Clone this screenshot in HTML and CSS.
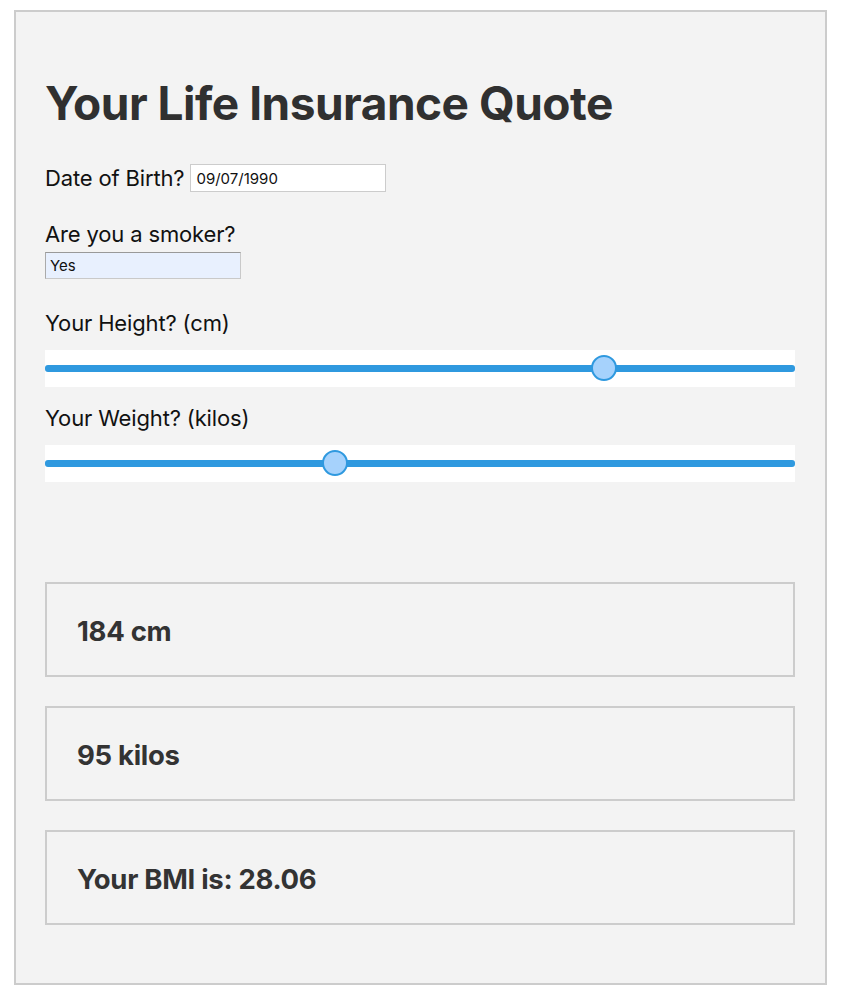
FILE: index.html
```html
<!DOCTYPE html>
<html lang="en">
<head>
<meta charset="utf-8">
<title>Your Life Insurance Quote</title>
<link rel="stylesheet" href="styles.css">
</head>
<body>
<main class="quote">
  <h1 class="title">Your Life Insurance Quote</h1>

  <div class="row">
    <label class="label" for="dob">Date of Birth?</label>
    <input class="text-input" id="dob" type="text" value="09/07/1990">
  </div>

  <label class="label label-block" for="smoker">Are you a smoker?</label>
  <select class="select" id="smoker">
    <option>Yes</option>
    <option>No</option>
  </select>

  <label class="label label-block label-height" for="height">Your Height? (cm)</label>
  <input class="range" id="height" type="range" min="0" max="244" value="184">

  <label class="label label-block label-weight" for="weight">Your Weight? (kilos)</label>
  <input class="range" id="weight" type="range" min="30" max="200" value="95">

  <div class="results">
    <div class="card">184 cm</div>
    <div class="card">95 kilos</div>
    <div class="card">Your BMI is: 28.06</div>
  </div>
</main>
</body>
</html>
```

FILE: styles.css
```css
html, body {
  margin: 0;
  padding: 0;
  background: #ffffff;
}

body {
  font-family: Inter, "Noto Sans", "Liberation Sans", sans-serif;
  color: #111111;
}

.quote {
  margin: 10px 0 0 14px;
  width: 750px;
  padding: 63px 30px 58px 29px;
  border: 2px solid #cccccc;
  background: #f3f3f3;
}

.title {
  margin: 0;
  font-size: 46px;
  line-height: 56px;
  font-weight: 700;
  color: #303030;
  letter-spacing: -0.5px;
}

.row {
  display: flex;
  align-items: center;
  gap: 6px;
  height: 28px;
  margin-top: 33px;
}

.label {
  font-size: 22px;
  line-height: 28px;
  color: #111111;
  letter-spacing: -0.15px;
}

.label-block {
  display: block;
  line-height: 24px;
  margin-top: 30px;
}

.label-height {
  margin-top: 32px;
}

.label-weight {
  margin-top: 19px;
}

.text-input {
  box-sizing: border-box;
  width: 196px;
  height: 28px;
  margin: 0;
  padding: 0 5px;
  border: 1px solid #cccccc;
  background: #ffffff;
  font-family: Inter, "Liberation Sans", Arial, sans-serif;
  font-size: 15px;
  color: #111111;
  outline: none;
}

.select {
  -webkit-appearance: none;
  appearance: none;
  display: block;
  box-sizing: border-box;
  width: 196px;
  height: 27px;
  margin: 6px 0 0;
  padding: 0 4px;
  border: 1px solid #c9c9c9;
  border-top-color: #999999;
  border-left-color: #aaaaaa;
  border-radius: 0;
  background: #e8f0fe;
  font-family: Inter, "Liberation Sans", Arial, sans-serif;
  font-size: 15px;
  color: #111111;
}

.range {
  -webkit-appearance: none;
  appearance: none;
  display: block;
  width: 100%;
  height: 37px;
  margin: 15px 0 0;
  padding: 0;
  background: #ffffff;
  outline: none;
}

.range::-webkit-slider-runnable-track {
  height: 7px;
  background: #2f99df;
  border-radius: 3px;
}

.range::-webkit-slider-thumb {
  -webkit-appearance: none;
  appearance: none;
  box-sizing: border-box;
  width: 26px;
  height: 26px;
  margin-top: -10px;
  border-radius: 50%;
  border: 2px solid #2f99df;
  background: #a6d2fc;
}

.results {
  display: flex;
  flex-direction: column;
  gap: 29px;
  margin-top: 100px;
}

.card {
  box-sizing: border-box;
  height: 95px;
  padding: 30px 30px 26px;
  border: 2px solid #cccccc;
  font-size: 27.5px;
  line-height: 35px;
  font-weight: 700;
  color: #333333;
  letter-spacing: -0.3px;
}
```
